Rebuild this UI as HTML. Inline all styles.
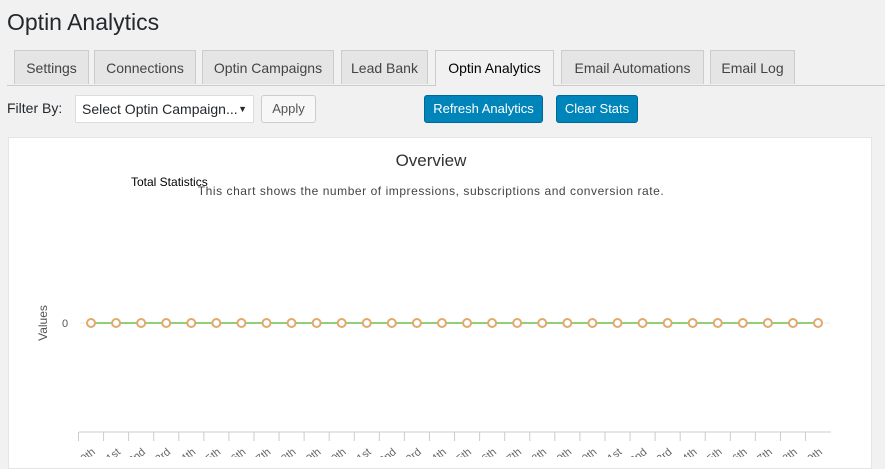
<!DOCTYPE html><html><head><style>
body{margin:0;width:885px;height:457px;overflow:hidden;background:#f1f1f1;font-family:"Liberation Sans",sans-serif;color:#23282d;position:relative}
.a{position:absolute}
h1{position:absolute;left:7px;top:9px;margin:0;font-weight:400;font-size:23px;color:#23282d}
.tab{position:absolute;top:50px;height:34px;border:1px solid #ccc;border-bottom:none;background:#e5e5e5;font-size:14px;font-weight:400;color:#444;text-align:center;line-height:35px;box-sizing:border-box}
.tab.on{background:#f1f1f1;color:#000;height:36px}
.btn{position:absolute;font-size:13px;text-align:center;box-sizing:border-box;border-radius:3px}
</style></head><body>
<h1>Optin Analytics</h1>
<div class="a" style="left:7px;top:85px;width:878px;height:1px;background:#ccc"></div>
<div class="tab" style="left:14px;width:75px">Settings</div>
<div class="tab" style="left:94px;width:102px">Connections</div>
<div class="tab" style="left:202px;width:132px">Optin Campaigns</div>
<div class="tab" style="left:341px;width:87px">Lead Bank</div>
<div class="tab on" style="left:435px;width:119px">Optin Analytics</div>
<div class="tab" style="left:561px;width:143px">Email Automations</div>
<div class="tab" style="left:710px;width:85px">Email Log</div>
<div class="a" style="left:7px;top:100px;font-size:14px">Filter By:</div>
<div class="a" style="left:75px;top:95px;width:179px;height:28px;box-sizing:border-box;background:#fff;border:1px solid #ddd;font-size:14px;line-height:27px;padding-left:6px">Select Optin Campaign...<span style="position:absolute;right:6px;font-size:9px">▼</span></div>
<div class="btn" style="left:261px;top:95px;width:55px;height:28px;background:#f7f7f7;border:1px solid #ccc;line-height:26px;color:#555">Apply</div>
<div class="btn" style="left:424px;top:95px;width:119px;height:28px;background:#0085ba;border:1px solid #006799;color:#fff;line-height:26px">Refresh Analytics</div>
<div class="btn" style="left:556px;top:95px;width:82px;height:28px;background:#0085ba;border:1px solid #006799;color:#fff;line-height:26px">Clear Stats</div>
<div class="a" style="left:8px;top:137px;width:862px;height:330px;background:#fff;border:1px solid #e5e5e5"></div>
<svg class="a" style="left:0;top:0" width="885" height="457" font-family="Liberation Sans,sans-serif">
<text x="431" y="166" font-size="17" text-anchor="middle" fill="#333">Overview</text>
<text x="431" y="195" font-size="12" text-anchor="middle" fill="#444" letter-spacing="0.55">This chart shows the number of impressions, subscriptions and conversion rate.</text>
<text x="131" y="186" font-size="12" fill="#000">Total Statistics</text>
<text x="47" y="323" font-size="12" fill="#555" transform="rotate(-90 47 323)" text-anchor="middle">Values</text>
<text x="62" y="327" font-size="11" fill="#555">0</text>
<line x1="80" y1="323" x2="830" y2="323" stroke="#eee"/>
<line x1="91" y1="323" x2="818" y2="323" stroke="#8fcf7a" stroke-width="2"/>
<g id="pts"></g>
<line x1="79" y1="432" x2="831" y2="432" stroke="#ccc"/>
<g id="tk" font-size="11" fill="#666"></g>
</svg>
<script>
var s="http://www.w3.org/2000/svg",g=document.getElementById('pts'),t=document.getElementById('tk');
var lb=["0th","1st","2nd","3rd","4th","5th","6th","7th","8th","9th","0th","1st","2nd","3rd","4th","5th","6th","7th","8th","9th","0th","1st","2nd","3rd","4th","5th","6th","7th","8th","9th"];
for(var i=0;i<30;i++){var x=91+i*25.07;var c=document.createElementNS(s,'circle');c.setAttribute('cx',x);c.setAttribute('cy',323);c.setAttribute('r',4);c.setAttribute('fill','#fff');c.setAttribute('stroke','#e0a96d');c.setAttribute('stroke-width',2);g.appendChild(c);
var l=document.createElementNS(s,'line');l.setAttribute('x1',x-12.5);l.setAttribute('x2',x-12.5);l.setAttribute('y1',432);l.setAttribute('y2',441);l.setAttribute('stroke','#ccc');t.appendChild(l);
var tx=document.createElementNS(s,'text');tx.setAttribute('x',x+5);tx.setAttribute('y',453);tx.setAttribute('text-anchor','end');tx.setAttribute('transform','rotate(-40 '+(x+5)+' 453)');tx.textContent=lb[i];t.appendChild(tx);}
</script>
</body></html>
